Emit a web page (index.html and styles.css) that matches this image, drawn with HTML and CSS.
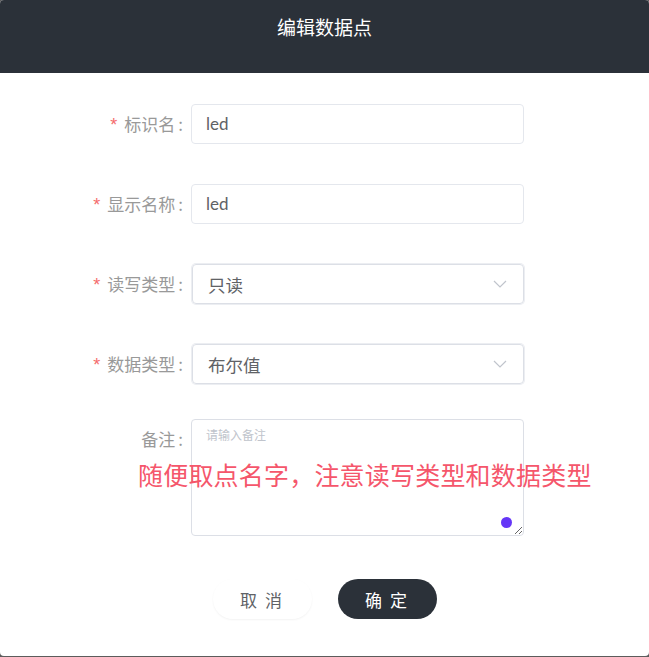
FILE: index.html
```html
<!DOCTYPE html>
<html lang="zh">
<head>
<meta charset="utf-8">
<link rel="stylesheet" href="styles.css">
</head>
<body>
<div class="dialog">
  <div class="header">编辑数据点</div>
  <div class="form">
    <div class="row">
      <label class="label"><span class="req">*</span>标识名<span class="colon">:</span></label>
      <div class="input">led</div>
    </div>
    <div class="row">
      <label class="label"><span class="req">*</span>显示名称<span class="colon">:</span></label>
      <div class="input">led</div>
    </div>
    <div class="row">
      <label class="label"><span class="req">*</span>读写类型<span class="colon">:</span></label>
      <div class="select"><span class="val">只读</span>
        <svg class="chev" width="14" height="10" viewBox="0 0 14 10"><path d="M1 2 L7 8 L13 2" fill="none" stroke="#c0c4cc" stroke-width="1.2"/></svg>
      </div>
    </div>
    <div class="row">
      <label class="label"><span class="req">*</span>数据类型<span class="colon">:</span></label>
      <div class="select"><span class="val">布尔值</span>
        <svg class="chev" width="14" height="10" viewBox="0 0 14 10"><path d="M1 2 L7 8 L13 2" fill="none" stroke="#c0c4cc" stroke-width="1.2"/></svg>
      </div>
    </div>
    <div class="row row-note">
      <label class="label">备注<span class="colon">:</span></label>
      <div class="ta-wrap">
        <textarea class="textarea" placeholder="请输入备注"></textarea>
        <span class="dot"></span>
      </div>
      <div class="note">随便取点名字，注意读写类型和数据类型</div>
    </div>
    <div class="buttons">
      <button class="btn cancel">取 消</button>
      <button class="btn confirm">确 定</button>
    </div>
  </div>
</div>
</body>
</html>
```
FILE: styles.css
```css
html, body {
  margin: 0;
  padding: 0;
}
body {
  background: #5c5c5c;
  width: 649px;
  height: 657px;
  overflow: hidden;
  font-family: "Noto Sans CJK SC", "Noto Sans", sans-serif;
}
.dialog {
  width: 649px;
  height: 656px;
  background: #fff;
  border-radius: 4px;
  overflow: hidden;
}
.header {
  height: 73px;
  background: #2b3139;
  color: #fff;
  font-size: 19px;
  text-align: center;
  line-height: 54px;
}
.form {
  padding-top: 31px;
  display: flex;
  flex-direction: column;
}
.row {
  display: flex;
  align-items: flex-start;
  height: 40px;
  margin-bottom: 40px;
  position: relative;
}
.label {
  width: 191px;
  padding-right: 8px;
  box-sizing: border-box;
  text-align: right;
  font-size: 17px;
  line-height: 40px;
  color: #999;
  white-space: nowrap;
}
.colon {
  margin-left: 3px;
}
.req {
  color: #f56c6c;
  margin-right: 7px;
  font-size: 18px;
  font-family: "Liberation Sans", sans-serif;
}
.input {
  width: 333px;
  height: 40px;
  box-sizing: border-box;
  border: 1px solid #e4e7ed;
  border-radius: 4px;
  padding-left: 14px;
  font-family: Lato, "Noto Sans CJK SC", sans-serif;
  font-size: 17px;
  line-height: 38px;
  color: #606266;
}
.select {
  margin-left: 1px;
  width: 332px;
  height: 40px;
  box-sizing: border-box;
  border: 1px solid #dcdfe6;
  box-shadow: 0 0 0 1px #eceef2;
  border-radius: 4px;
  padding: 0 14px 0 15px;
  display: flex;
  align-items: center;
  justify-content: space-between;
  font-size: 17.5px;
  color: #606266;
}
.chev {
  margin-right: 2px;
}
.row-note {
  margin-top: -5px;
  height: 117px;
  margin-bottom: 43px;
}
.ta-wrap {
  position: relative;
  width: 333px;
  height: 117px;
}
.textarea {
  width: 333px;
  height: 117px;
  box-sizing: border-box;
  border: 1px solid #dcdfe6;
  border-radius: 4px;
  padding: 6px 14px;
  font-family: "Noto Sans CJK SC", sans-serif;
  font-size: 12px;
  color: #606266;
  outline: none;
  display: block;
  resize: vertical;
}
.textarea::placeholder {
  color: #c0c4cc;
}
.dot {
  position: absolute;
  right: 12px;
  bottom: 8px;
  width: 11px;
  height: 11px;
  border-radius: 50%;
  background: #6536f7;
}
.note {
  position: absolute;
  left: 138px;
  top: 38px;
  font-size: 25px;
  letter-spacing: 0.2px;
  line-height: 34px;
  color: #f5566b;
  white-space: nowrap;
}
.buttons {
  display: flex;
  justify-content: center;
  gap: 26px;
}
.btn {
  width: 99px;
  height: 40px;
  border-radius: 20px;
  border: none;
  font-family: "Noto Sans CJK SC", sans-serif;
  font-size: 17px;
  letter-spacing: 2px;
  cursor: pointer;
}
.cancel {
  background: #fff;
  color: #606266;
  box-shadow: 0 1px 2px rgba(0,0,0,0.05);
}
.confirm {
  background: #2b3139;
  color: #fff;
}
```
